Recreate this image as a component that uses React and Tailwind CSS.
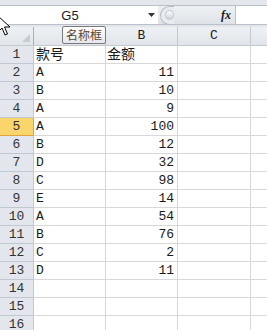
import React from "react";

const rows = [
  ["款号", "金额"],
  ["A", "11"],
  ["B", "10"],
  ["A", "9"],
  ["A", "100"],
  ["B", "12"],
  ["D", "32"],
  ["C", "98"],
  ["E", "14"],
  ["A", "54"],
  ["B", "76"],
  ["C", "2"],
  ["D", "11"],
  ["", ""],
  ["", ""],
  ["", ""],
];

const mono = { fontFamily: '"Liberation Mono", "Noto Sans CJK SC", monospace' };

export default function App() {
  return (
    <div className="relative w-[267px] h-[330px] overflow-hidden bg-white text-[#1a1a1a]" style={mono}>
      {/* top strip */}
      <div className="h-[6px] bg-[#e3e7ec] border-b border-[#b9c0c9]" />
      {/* formula bar */}
      <div className="flex h-[19px] border-b border-[#b9c0c9]">
        <div className="relative w-[158px] bg-white flex items-center">
          <span className="w-[140px] text-center text-[13px] leading-none" style={{ fontFamily: '"Liberation Sans", sans-serif' }}>G5</span>
          <svg width="7" height="4" viewBox="0 0 7 4" className="ml-[8px]">
            <path d="M0 0 H7 L3.5 4 Z" fill="#333" />
          </svg>
        </div>
        <div className="w-[78px] flex items-center bg-gradient-to-b from-[#eef1f4] to-[#dfe3e8] border-r border-[#b9c0c9]">
          <div className="ml-[2px] w-[14px] h-[19px] rounded-l-full border-l border-t border-b border-[#b8bec6] bg-[#e8ebef] flex items-center justify-end">
            <div className="w-[9px] h-[10px] rounded-full bg-gradient-to-b from-[#ffffff] to-[#cdd2d8] border border-[#c3c8cf]" />
          </div>
          <span className="ml-auto mr-[4px] text-[12px] italic font-bold leading-none" style={{ fontFamily: '"Liberation Serif", serif' }}>fx</span>
        </div>
        <div className="flex-1 bg-white" />
      </div>
      <div className="h-[2px] bg-[#e3e7ec]" />
      {/* column headers */}
      <div className="flex h-[19px] bg-gradient-to-b from-[#eef1f4] to-[#e1e5ea] border-b border-[#c3c9d1] text-[13px]">
        <div className="w-[34px] border-r border-[#a7afba] relative">
          <svg width="8" height="8" viewBox="0 0 8 8" className="absolute right-[3px] bottom-[3px]">
            <path d="M8 0 V8 H0 Z" fill="#c6ccd4" />
          </svg>
        </div>
        <div className="w-[72px] border-r border-[#c3c9d1]" />
        <div className="w-[72px] border-r border-[#c3c9d1] flex items-center justify-center">B</div>
        <div className="w-[73px] border-r border-[#c3c9d1] flex items-center justify-center">C</div>
        <div className="flex-1" />
      </div>
      {/* data rows */}
      {rows.map((r, i) => {
        const sel = i === 4;
        return (
          <div key={i} className="flex h-[18px] text-[13px] leading-none">
            <div
              className={
                sel
                  ? "w-[34px] flex items-center justify-center bg-[#f9d56c] border-b border-r border-[#e2a33c] text-[#333]"
                  : "w-[34px] flex items-center justify-center bg-[#e3e7ed] border-b border-r border-[#c2c8d0] text-[#333]"
              }
            >
              {i + 1}
            </div>
            <div className={"w-[72px] flex items-center pl-[2px] border-b border-r border-[#d8d8d8] " + (i === 0 ? "text-[14px]" : "")}>
              {r[0]}
            </div>
            <div className={"w-[72px] flex items-center border-b border-r border-[#d8d8d8] " + (i === 0 ? "pl-[1px] text-[14px]" : "justify-end pr-[3px]")}>
              {r[1]}
            </div>
            <div className="w-[73px] border-b border-r border-[#d8d8d8]" />
            <div className="flex-1 border-b border-[#d8d8d8]" />
          </div>
        );
      })}
      {/* tooltip */}
      <div className="absolute left-[62px] top-[26px] h-[18px] px-[3px] flex items-center rounded-[2px] border border-[#7a7a7a] bg-gradient-to-b from-[#ffffff] to-[#e6e7ee] text-[12px] leading-none text-[#5a4634]" style={{ fontFamily: '"Noto Sans CJK SC", sans-serif' }}>
        名称框
      </div>
      {/* cursor */}
      <svg width="14" height="22" viewBox="0 0 14 22" className="absolute left-[-3px] top-[15px]">
        <path d="M1 1 L1 17 L5 13 L8 20 L10.5 19 L7.5 12 L13 12 Z" fill="#fff" stroke="#000" strokeWidth="1" strokeLinejoin="miter" />
      </svg>
    </div>
  );
}
